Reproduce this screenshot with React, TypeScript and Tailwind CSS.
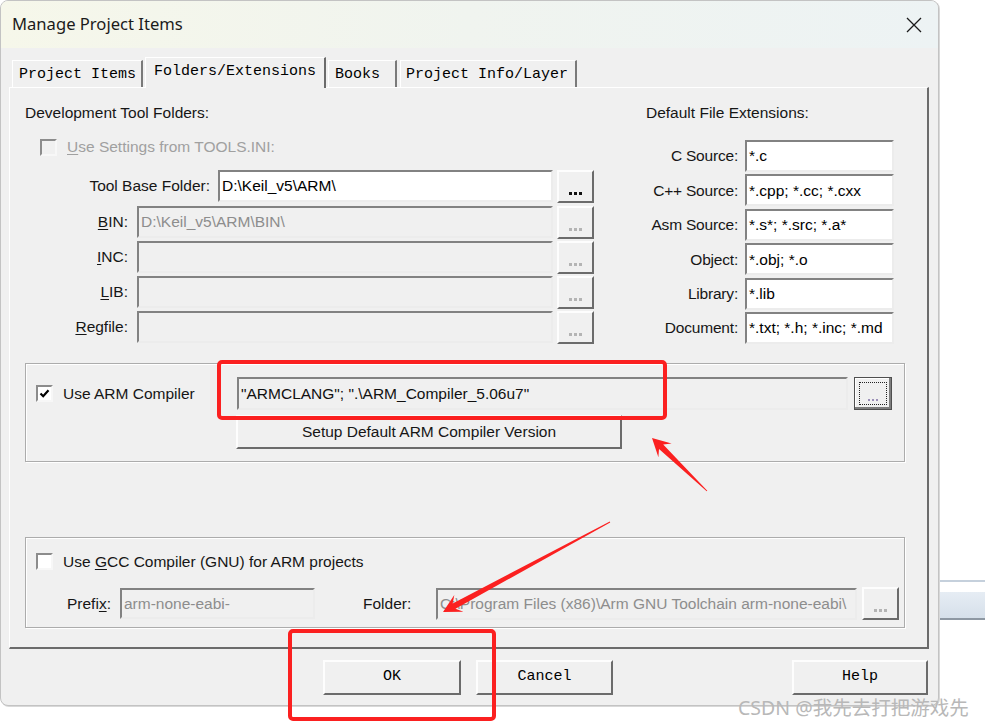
import React from "react";

const SANS = "font-['Liberation_Sans',Arial,sans-serif]";
const MONO = "font-['Liberation_Mono','Courier_New',monospace]";
const SUNKEN =
  "border-2 border-t-[#828282] border-l-[#828282] border-r-[#ececec] border-b-[#ececec]";
const RAISED =
  "border-2 border-t-[#fdfdfd] border-l-[#fdfdfd] border-r-[#6b6b6b] border-b-[#6b6b6b]";

function U({ children }: { children: React.ReactNode }) {
  return <span className="underline underline-offset-[2px] decoration-1">{children}</span>;
}

function CheckBox({ checked, disabled }: { checked?: boolean; disabled?: boolean }) {
  return (
    <span
      className={`flex h-[17px] w-[17px] shrink-0 items-center justify-center border-2 border-t-[#8c8c8c] border-l-[#8c8c8c] border-r-[#f7f7f7] border-b-[#f7f7f7] ${
        disabled ? "bg-[#f0f0f0]" : "bg-white"
      }`}
    >
      {checked && (
        <svg width="11" height="11" viewBox="0 0 11 11">
          <path d="M1.5 5.5 L4.2 8.2 L9.5 2.2" fill="none" stroke="#000" strokeWidth="2.2" />
        </svg>
      )}
    </span>
  );
}

function Dots({ disabled }: { disabled?: boolean }) {
  return (
    <button
      className={`ml-[4px] flex h-[33px] w-[37px] shrink-0 items-end justify-center bg-[#f0f0f0] pb-[6px] ${RAISED}`}
    >
      <span className="flex gap-[2px]">
        {[0, 1, 2].map((i) => (
          <span
            key={i}
            className={`block h-[3px] w-[3px] ${disabled ? "bg-[#b4b4b4]" : "bg-[#111]"}`}
          />
        ))}
      </span>
    </button>
  );
}

// tail (x1,y1) -> tip (x2,y2), tapered shaft like the screenshot tool's arrow
function arrowPoints(x1: number, y1: number, x2: number, y2: number) {
  const dx = x2 - x1;
  const dy = y2 - y1;
  const len = Math.hypot(dx, dy);
  const ux = dx / len;
  const uy = dy / len;
  const nx = -uy;
  const ny = ux;
  const L = 18;
  const W = 9.5;
  const w1 = 3;
  const w0 = 0.4;
  const bx = x2 - ux * L * 0.7;
  const by = y2 - uy * L * 0.7;
  const hx = x2 - ux * L;
  const hy = y2 - uy * L;
  const p = [
    [x1 + nx * w0, y1 + ny * w0],
    [bx + nx * w1, by + ny * w1],
    [hx + nx * W, hy + ny * W],
    [x2, y2],
    [hx - nx * W, hy - ny * W],
    [bx - nx * w1, by - ny * w1],
    [x1 - nx * w0, y1 - ny * w0],
  ];
  return p.map(([a, b]) => `${a.toFixed(1)},${b.toFixed(1)}`).join(" ");
}

const folderRows = [
  { label: <U>B</U>, rest: "IN:", value: "D:\\Keil_v5\\ARM\\BIN\\" },
  { label: <U>I</U>, rest: "NC:", value: "" },
  { label: <U>L</U>, rest: "IB:", value: "" },
  { label: <U>R</U>, rest: "egfile:", value: "" },
];

const extRows = [
  ["C Source:", "*.c"],
  ["C++ Source:", "*.cpp; *.cc; *.cxx"],
  ["Asm Source:", "*.s*; *.src; *.a*"],
  ["Object:", "*.obj; *.o"],
  ["Library:", "*.lib"],
  ["Document:", "*.txt; *.h; *.inc; *.md"],
];

export default function App() {
  return (
    <div className={`relative h-[727px] w-[985px] overflow-hidden bg-white ${SANS} text-[15.5px] text-[#161616]`}>
      {/* window peeking out behind the dialog */}
      <div className="absolute left-[938px] top-[580px] h-[48px] w-[47px] border-t-2 border-[#c5d0dc] bg-white">
        <div className="mt-[10px] h-[28px] border-b-2 border-[#8e98a3] bg-linear-to-b from-[#e6edf4] to-[#d6e0ea]" />
      </div>

      <div className="relative flex h-[706px] w-[939px] flex-col overflow-hidden rounded-[8px] border border-[#c3c3c3] bg-[#f0f0f0] shadow-[1px_1px_0_#d8d8d8]">
        {/* title bar */}
        <div className="flex h-[47px] items-center justify-between bg-linear-to-r from-[#f6f7ea] via-[#f0f4ef] to-[#edf3f4] pl-[11px] pr-[16px]">
          <span className="font-['Noto_Sans',sans-serif] text-[16.6px] text-[#1b1b1b]">Manage Project Items</span>
          <svg width="16" height="16" viewBox="0 0 16 16">
            <path d="M1 1L15 15M15 1L1 15" stroke="#1a1a1a" strokeWidth="1.3" />
          </svg>
        </div>

        {/* tabs */}
        <div className={`ml-[11px] mt-[9px] flex h-[30px] items-end ${MONO} text-[15px] text-black`}>
          <div className="flex h-[27px] w-[131px] items-center border-l border-t border-l-white border-t-white border-r-2 border-r-[#7a7a7a] pl-[6px] pt-[2px]">
            Project Items
          </div>
          <div className="relative z-10 -mb-px ml-[2px] flex h-[31px] w-[181px] items-center border-l border-t border-l-white border-t-white border-r-2 border-r-[#6b6b6b] bg-[#f0f0f0] pb-[2px] pl-[8px]">
            Folders/Extensions
          </div>
          <div className="ml-[2px] flex h-[27px] w-[69px] items-center border-l border-t border-l-white border-t-white border-r-2 border-r-[#7a7a7a] pl-[6px] pt-[2px]">
            Books
          </div>
          <div className="ml-[3px] flex h-[27px] w-[177px] items-center border-l border-t border-l-white border-t-white border-r-2 border-r-[#7a7a7a] pl-[5px] pt-[2px]">
            Project Info/Layer
          </div>
        </div>

        {/* tab page */}
        <div className="ml-[8px] flex h-[562px] w-[920px] flex-col border-l border-t border-l-white border-t-white border-r-2 border-b-2 border-r-[#6b6b6b] border-b-[#6b6b6b]">
          <div className="flex h-[275px]">
            {/* development tool folders */}
            <div className="ml-[15px] w-[569px]">
              <div className="mt-[16px] h-[18px] leading-[18px]">Development Tool Folders:</div>
              <div className="mt-[16px] flex h-[18px] items-center pl-[15px]">
                <CheckBox disabled />
                <span className="ml-[10px] text-[#a0a0a0]">
                  <U>U</U>se Settings from TOOLS.INI:
                </span>
              </div>
              <div className="mt-[14px] flex flex-col gap-[3px]">
                <div className="mb-px flex h-[32px] items-center">
                  <span className="w-[185px] text-right">Tool Base Folder:</span>
                  <div className={`ml-[8px] flex h-[32px] flex-1 items-center bg-white px-[2px] text-black ${SUNKEN}`}>
                    D:\Keil_v5\ARM\
                  </div>
                  <Dots />
                </div>
                {folderRows.map((r, i) => (
                  <div key={i} className="flex h-[32px] items-center">
                    <span className="w-[103px] text-right">
                      {r.label}
                      {r.rest}
                    </span>
                    <div className={`ml-[9px] flex h-[32px] flex-1 items-center bg-[#f0f0f0] px-[2px] text-[#8d8d8d] ${SUNKEN}`}>
                      {r.value}
                    </div>
                    <Dots disabled />
                  </div>
                ))}
              </div>
            </div>

            {/* default file extensions */}
            <div className="ml-[52px] w-[248px]">
              <div className="mt-[16px] h-[18px] leading-[18px]">Default File Extensions:</div>
              <div className="mt-[18px] flex flex-col gap-[2.4px]">
                {extRows.map(([label, value]) => (
                  <div key={label} className="flex h-[32px] items-center">
                    <span className="w-[92px] text-right tracking-[-0.2px]">{label}</span>
                    <div className={`ml-[7px] flex h-[32px] w-[149px] items-center bg-white px-[2px] text-black ${SUNKEN}`}>
                      {value}
                    </div>
                  </div>
                ))}
              </div>
            </div>
          </div>

          {/* ARM compiler group */}
          <div className="ml-[15px] h-[99px] w-[880px] border border-[#acacac] pl-[10px] pt-[13px] shadow-[inset_1px_1px_0_#fff,1px_1px_0_#fff]">
            <div className="flex h-[33px] items-center">
              <div className="flex w-[201px] items-center">
                <CheckBox checked />
                <span className="ml-[10px]">Use ARM Compiler</span>
              </div>
              <div className={`flex h-[33px] w-[611px] items-center bg-[#f0f0f0] px-[2px] text-[#111] ${SUNKEN}`}>
                "ARMCLANG"; ".\ARM_Compiler_5.06u7"
              </div>
              <button className="ml-[6px] flex h-[33px] w-[38px] items-stretch border border-[#4f4f4f] bg-[#f0f0f0] p-[4px] shadow-[inset_-2px_-2px_0_#7d7d7d,inset_1px_1px_0_#fff]">
                <span className="flex flex-1 items-end justify-center border border-dotted border-[#222] pb-[3px]">
                  <span className="flex gap-[2px]">
                    {[0, 1, 2].map((i) => (
                      <span key={i} className="block h-[2px] w-[2px] bg-[#9b8fb8]" />
                    ))}
                  </span>
                </span>
              </button>
            </div>
            <button className={`ml-[200px] mt-[5px] flex h-[34px] w-[386px] items-center justify-center bg-[#f0f0f0] ${RAISED}`}>
              Setup Default ARM Compiler Version
            </button>
          </div>

          {/* GCC group */}
          <div className="ml-[15px] mt-[75px] h-[91px] w-[880px] border border-[#acacac] pl-[10px] pt-[15px] shadow-[inset_1px_1px_0_#fff,1px_1px_0_#fff]">
            <div className="flex h-[17px] items-center">
              <CheckBox />
              <span className="ml-[10px]">
                Use <U>G</U>CC Compiler (GNU) for ARM projects
              </span>
            </div>
            <div className="ml-[31px] mt-[17px] flex h-[33px] items-center">
              <span className="w-[53px]">
                Prefi<U>x</U>:
              </span>
              <div className={`flex h-[31px] w-[195px] items-center bg-[#f0f0f0] px-[2px] text-[#8d8d8d] ${SUNKEN}`}>
                arm-none-eabi-
              </div>
              <span className="ml-[48px] w-[73px]">Folder:</span>
              <div className={`flex h-[32px] w-[421px] items-center overflow-hidden whitespace-nowrap bg-[#f0f0f0] px-[2px] text-[#8d8d8d] ${SUNKEN}`}>
                C:\Program Files (x86)\Arm GNU Toolchain arm-none-eabi\
              </div>
              <div className="ml-[1px]">
                <Dots disabled />
              </div>
            </div>
          </div>
        </div>

        {/* dialog buttons */}
        <div className={`mt-[11px] flex h-[35px] ${MONO} text-[15px] text-black`}>
          <button className={`ml-[322px] flex h-[35px] w-[138px] items-center justify-center bg-[#f0f0f0] ${RAISED}`}>
            OK
          </button>
          <button className={`ml-[15px] flex h-[35px] w-[137px] items-center justify-center bg-[#f0f0f0] ${RAISED}`}>
            Cancel
          </button>
          <button className={`ml-[179px] flex h-[35px] w-[136px] items-center justify-center bg-[#f0f0f0] ${RAISED}`}>
            Help
          </button>
        </div>
      </div>

      {/* annotations */}
      <div className="pointer-events-none absolute left-[217px] top-[360px] h-[60px] w-[450px] rounded-[5px] border-4 border-[#fb2020]" />
      <div className="pointer-events-none absolute left-[288px] top-[629px] h-[92px] w-[208px] rounded-[5px] border-4 border-[#fb2020]" />
      <svg className="pointer-events-none absolute left-0 top-0" width="985" height="727" viewBox="0 0 985 727">
        <polygon points={arrowPoints(707, 491, 652, 438)} fill="#fb2020" />
        <polygon points={arrowPoints(610, 522, 443, 612)} fill="#fb2020" />
      </svg>

      <div className="pointer-events-none absolute left-[738px] top-[697px] font-['Noto_Sans','Noto_Sans_CJK_SC',sans-serif] text-[19.5px] leading-[22px] text-[#b8b8b8]">
        CSDN @我先去打把游戏先
      </div>
    </div>
  );
}
